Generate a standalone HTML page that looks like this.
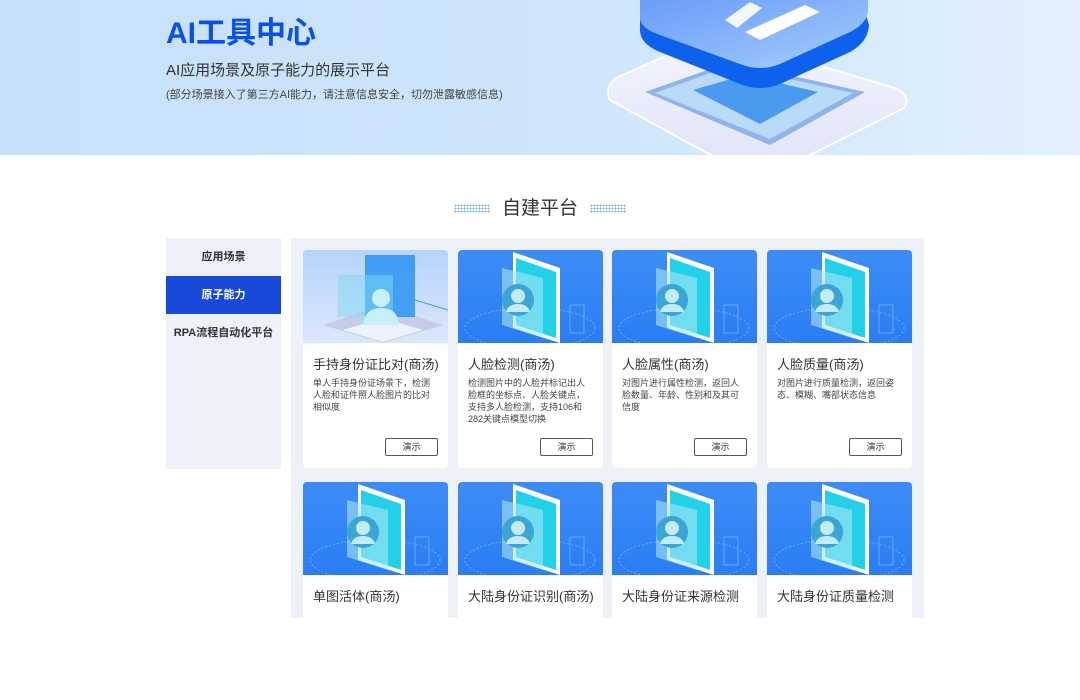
<!DOCTYPE html>
<html><head><meta charset="utf-8">
<style>
*{margin:0;padding:0;box-sizing:border-box}
body{width:1080px;height:609px;overflow:hidden;background:#fff;font-family:"Liberation Sans","Noto Sans CJK SC",sans-serif;position:relative}
.hero{position:absolute;left:0;top:0;width:1080px;height:155px;background:linear-gradient(90deg,#c7e1fb 0%,#cde4fb 45%,#d6eafc 75%,#e4f1fd 100%);overflow:hidden}
.h1{position:absolute;left:166px;top:8px;font-size:30px;font-weight:bold;color:#0a4ff0}
.h2{position:absolute;left:166px;top:59px;font-size:15px;color:#333}
.h3{position:absolute;left:166px;top:86px;font-size:11px;color:#444}
.title{position:absolute;left:0;width:1080px;top:193px;text-align:center;font-size:19px;color:#333}
.dots{display:inline-block;width:36px;height:9px;vertical-align:middle;margin:0 12px;background-image:radial-gradient(circle,#6fb0ef 0.9px,transparent 1px);background-size:3px 3px}
.side{position:absolute;left:166px;top:238px;width:115px;height:231px;background:#eef1f8}
.side div{height:38px;line-height:38px;text-align:center;font-size:11px;font-weight:bold;color:#333}
.side .act{background:#1849d8;color:#fff}
.main{position:absolute;left:291px;top:238px;width:633px;height:380px;background:#eef1f8}
.card{position:absolute;width:145px;height:218px;background:#fff;border-radius:4px;overflow:hidden}
.card .img{height:93px;background:linear-gradient(180deg,#3d8cf7,#2a7df4)}
.card .t{padding:11px 10px 0;font-size:13px;color:#333;white-space:nowrap}
.card .d{padding:4px 10px 0;font-size:9px;line-height:12px;color:#444}
.card .b{position:absolute;left:82px;top:188px;width:53px;height:18px;border:1px solid #555;border-radius:2px;font-size:9px;text-align:center;line-height:16px;color:#333}
</style></head><body>
<div class="hero">
<svg width="1080" height="155" style="position:absolute;left:0;top:0">
<defs><linearGradient id="pl" x1="0" y1="0" x2="0" y2="1"><stop offset="0" stop-color="#f3f4fd"/><stop offset="1" stop-color="#dfe4f8"/></linearGradient>
<linearGradient id="tp" x1="0" y1="0" x2="1" y2="1"><stop offset="0" stop-color="#6b9cf9"/><stop offset="1" stop-color="#a5cdfb"/></linearGradient></defs>
<path d="M610 100 Q604 88 616 78 L690 45 Q720 34 750 45 L895 88 Q912 96 904 108 L800 160 Q760 175 720 160 Z" fill="url(#pl)" stroke="#fff" stroke-width="2"/>
<path d="M645 92 L730 62 L865 92 L770 145 Z" fill="#8fb3ec"/>
<path d="M655 93 L730 66 L853 93 L770 139 Z" fill="#b9daf9"/>
<path d="M693 90 L745 75 L818 92 L760 124 Z" fill="#4a9af0"/>
<path d="M640 30 L640 10 Q640 0 660 -5 L860 -5 L869 25 Q868 42 850 52 L780 84 Q760 92 740 84 L660 52 Q640 44 640 30Z" fill="#0e61ec"/>
<path d="M640 18 L640 0 L868 0 L868 12 Q866 24 850 32 L780 64 Q760 72 740 64 L660 35 Q640 28 640 18Z" fill="url(#tp)"/>
<path d="M745 32 L805 5 L820 12 L760 40Z" fill="#fff"/>
<path d="M725 20 L750 2 L762 8 L737 28Z" fill="#f2f6ff"/>
</svg>
<div class="h1">AI工具中心</div>
<div class="h2">AI应用场景及原子能力的展示平台</div>
<div class="h3">(部分场景接入了第三方AI能力，请注意信息安全，切勿泄露敏感信息)</div>
</div>
<div class="title"><span class="dots"></span>自建平台<span class="dots"></span></div>
<div class="side"><div>应用场景</div><div class="act">原子能力</div><div>RPA流程自动化平台</div></div>
<div class="main">
<div class="card" style="left:12px;top:12px"><div class="img" style="background:linear-gradient(180deg,#b6d3fb,#dbe8fb)">
<svg width="145" height="93"><path d="M20 75 L80 55 L140 75 L80 93Z" fill="#c6cce8"/><path d="M40 80 L80 68 L120 80 L80 92Z" fill="#eef2ff"/><rect x="62" y="5" width="50" height="62" fill="#2a95f2" opacity=".85"/><rect x="35" y="25" width="55" height="42" fill="#7fd7f7" opacity=".5"/><circle cx="78" cy="48" r="9" fill="#c8f0fa"/><path d="M60 75 Q62 58 78 58 Q95 58 96 75Z" fill="#c8f0fa"/><line x1="112" y1="50" x2="145" y2="60" stroke="#29a3f5"/></svg></div>
<div class="t">手持身份证比对(商汤)</div><div class="d">单人手持身份证场景下，检测人脸和证件照人脸图片的比对相似度</div><div class="b">演示</div></div>
<div class="card" style="left:167px;top:12px"><div class="img"><svg width="145" height="93"><g id="f"><ellipse cx="72" cy="78" rx="65" ry="20" fill="none" stroke="#6aa9f8" stroke-dasharray="2 2"/><path d="M55 2 L102 18 L102 93 L55 78Z" fill="#fff"/><path d="M58 8 L98 22 L98 88 L58 75Z" fill="#22d0e8"/><path d="M44 18 L85 28 L85 88 L44 75Z" fill="#a8e6f5" opacity=".6"/><circle cx="60" cy="50" r="16" fill="#3aa5d6"/><circle cx="60" cy="46" r="7" fill="#c4ecf7"/><path d="M48 62 Q50 54 60 54 Q70 54 72 62Z" fill="#c4ecf7"/><rect x="112" y="55" width="14" height="28" fill="none" stroke="#6aa9f8"/></g></svg></div>
<div class="t">人脸检测(商汤)</div><div class="d">检测图片中的人脸并标记出人脸框的坐标点、人脸关键点，支持多人脸检测，支持106和282关键点模型切换</div><div class="b">演示</div></div>
<div class="card" style="left:321px;top:12px"><div class="img"><svg width="145" height="93"><use href="#f"/></svg></div>
<div class="t">人脸属性(商汤)</div><div class="d">对图片进行属性检测，返回人脸数量、年龄、性别和及其可信度</div><div class="b">演示</div></div>
<div class="card" style="left:476px;top:12px"><div class="img"><svg width="145" height="93"><use href="#f"/></svg></div>
<div class="t">人脸质量(商汤)</div><div class="d">对图片进行质量检测，返回姿态、模糊、嘴部状态信息</div><div class="b">演示</div></div>
<div class="card" style="left:12px;top:244px"><div class="img"><svg width="145" height="93"><use href="#f"/></svg></div><div class="t">单图活体(商汤)</div></div>
<div class="card" style="left:167px;top:244px"><div class="img"><svg width="145" height="93"><use href="#f"/></svg></div><div class="t">大陆身份证识别(商汤)</div></div>
<div class="card" style="left:321px;top:244px"><div class="img"><svg width="145" height="93"><use href="#f"/></svg></div><div class="t">大陆身份证来源检测</div></div>
<div class="card" style="left:476px;top:244px"><div class="img"><svg width="145" height="93"><use href="#f"/></svg></div><div class="t">大陆身份证质量检测</div></div>
</div>
</body></html>
